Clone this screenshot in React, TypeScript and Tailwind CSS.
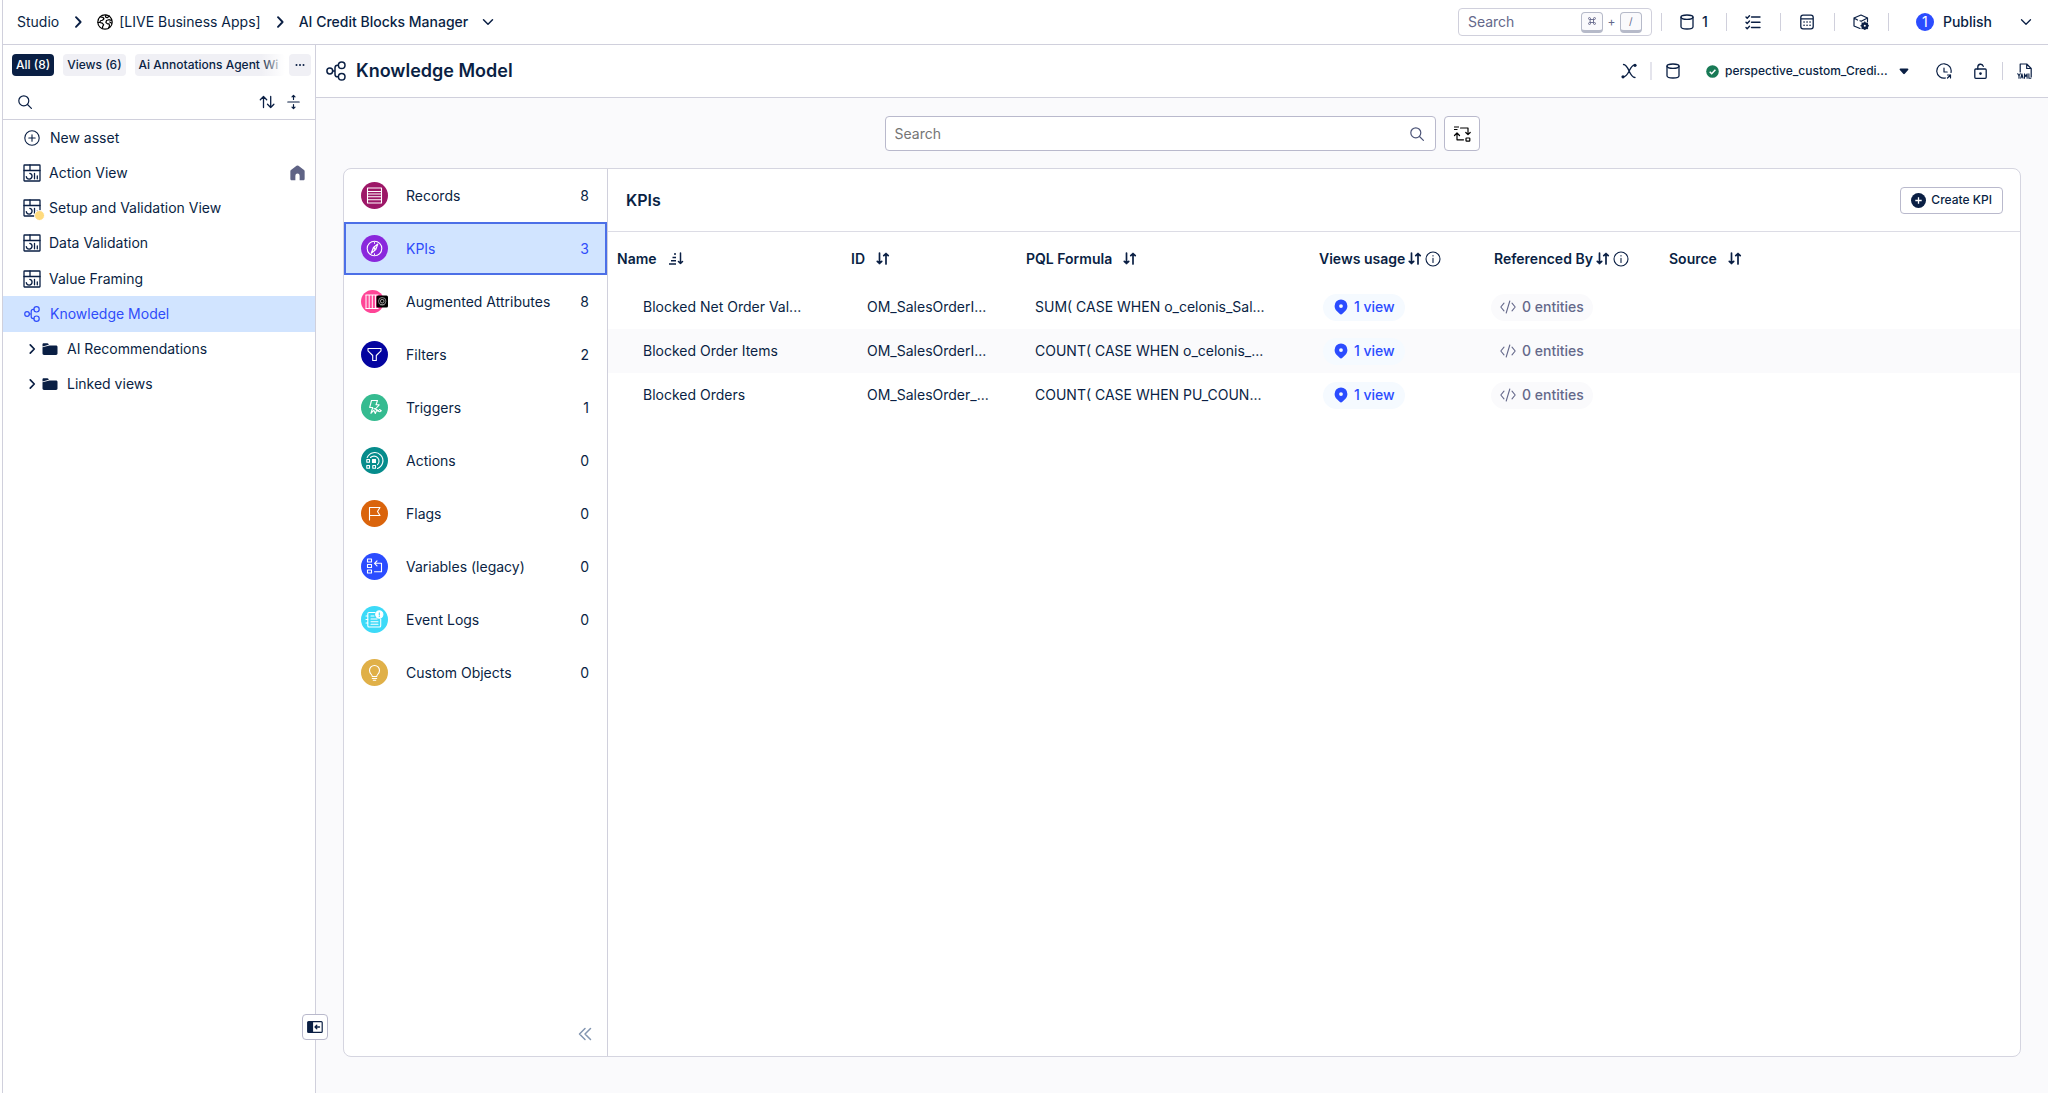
import { FC, ReactNode } from 'react';

interface IconProps {
  w?: number;
  h?: number;
  box?: string;
  sw?: number;
  className?: string;
  children: ReactNode;
}

const Icon: FC<IconProps> = ({ w = 16, h, box = '0 0 16 16', sw = 1.2, className = '', children }) => (
  <svg
    width={w}
    height={h ?? w}
    viewBox={box}
    fill="none"
    stroke="currentColor"
    strokeWidth={sw}
    strokeLinecap="round"
    strokeLinejoin="round"
    className={`shrink-0 ${className}`}
    aria-hidden="true"
  >
    {children}
  </svg>
);

const ChevronRight = ({ size = 16 }: { size?: number }) => (
  <Icon w={size} sw={1.9}>
    <path d="M6 3.2 10.6 8 6 12.8" />
  </Icon>
);

const ChevronDown = ({ sw = 1.6 }: { sw?: number }) => (
  <Icon w={12} box="0 0 12 12" sw={sw}>
    <path d="M1.5 3.8 6 8.3l4.5-4.5" />
  </Icon>
);

const Database = () => (
  <Icon w={14} h={16} box="0 0 14 16" sw={1.3}>
    <path d="M1 3.2C1 1.7 3 1 7 1s6 .7 6 2.2v9.6C13 14.3 11 15 7 15s-6-.7-6-2.2z" />
    <path d="M1 3.2C1.5 4.8 4 5.3 7 5.3s5.5-.5 6-2.1" />
  </Icon>
);

const SearchIcon = ({ className = '' }: { className?: string }) => (
  <Icon w={14} box="0 0 14 14" sw={1.2} className={className}>
    <circle cx="5.8" cy="5.8" r="5" />
    <path d="m9.5 9.5 3.9 3.9" />
  </Icon>
);

const ModelIcon = ({ w = 16 }: { w?: number }) => (
  <Icon w={w} box="0 0 20 20" sw={1.5}>
    <circle cx="3.8" cy="10" r="2.9" />
    <circle cx="15.7" cy="4.2" r="3.3" />
    <circle cx="15.7" cy="15.8" r="3.3" />
    <path d="M12.4 4.2h-.9c-1.8 0-2.500 1-2.500 2.600v6.400c0 1.600.7 2.600 2.500 2.600h.9M6.700 10H9" />
  </Icon>
);

const ViewIcon = () => (
  <Icon w={18} box="0 0 18 18" sw={1.3}>
    <rect x="1" y="1" width="16" height="16" rx=".5" />
    <path d="M1 6.500h16M7 1v5.500M6.800 9.300a2.900 2.900 0 1 1-3.500 3.300M11.500 9.300v5.500M14.300 12v2.800" />
  </Icon>
);

const Folder = () => (
  <Icon w={16} h={14} box="0 0 16 14" sw={0}>
    <path fill="currentColor" d="M.5 2.500C.5 1.700 1 1.200 1.800 1.200h3.500c.6 0 .9.300 1.200.9l.3.700L.5 4.400z" />
    <path fill="currentColor" d="M.5 5.300 7.500 3.500H14c.9 0 1.500.6 1.500 1.400v6.700c0 .8-.6 1.400-1.500 1.400H2c-.9 0-1.500-.6-1.500-1.400z" />
  </Icon>
);

const SortBoth = () => (
  <Icon w={14} h={13} box="0 0 14 13" sw={1.7}>
    <path d="M3.500 1v10.500M1.300 9.300l2.200 2.200 2.200-2.200M10 12V1.500M7.800 3.700 10 1.500l2.200 2.200" />
  </Icon>
);

const SortAsc = () => (
  <Icon w={16} h={13} box="0 0 16 13" sw={1.5}>
    <path d="M12.500 1v10.500M10.500 9.500l2 2 2-2" />
    <path strokeLinecap="butt" d="M1 12h7M3 8.700h5M4.500 5.400H8M6 2.100h2" />
  </Icon>
);

const Info = () => (
  <Icon w={16} sw={1.1}>
    <circle cx="8" cy="8" r="7" />
    <path d="M8 7.200v4.200M8 4.600v.3" />
  </Icon>
);

const Pin = () => (
  <Icon w={14} h={16} box="0 0 14 16" sw={0}>
    <path
      fill="currentColor"
      fillRule="evenodd"
      d="M7 .5a6.400 6.400 0 0 1 6.400 6.400c0 2.200-1 3.900-2.400 5.300l-2.600 2.600a2 2 0 0 1-2.800 0L3 12.200C1.600 10.800.6 9.100.6 6.900A6.400 6.400 0 0 1 7 .5zm0 4.700a1.900 1.900 0 1 0 0 3.800 1.900 1.900 0 0 0 0-3.800z"
    />
  </Icon>
);

const Code = () => (
  <Icon w={16} h={14} box="0 0 16 14" sw={1.1}>
    <path d="M4 3.200.8 7 4 10.800M12 3.200 15.200 7 12 10.800M9.800 1 6.200 13" />
  </Icon>
);

const Divider = () => <span className="h-[18px] w-px shrink-0 bg-[#d0d0dc]" />;

interface Category {
  name: string;
  count: number;
  color: string;
  art: ReactNode;
}

// every glyph is drawn on the same 27px disc
const categories: Category[] = [
  {
    name: 'Records',
    count: 8,
    color: '#9d1767',
    art: (
      <>
        <rect x="6.500" y="6" width="14" height="15" />
        <path d="M7 9.500h13M7 12h13M7 14.800h13M7 17.800h13" />
      </>
    ),
  },
  {
    name: 'KPIs',
    count: 3,
    color: '#8a27dc',
    art: (
      <>
        <circle cx="13.500" cy="13.500" r="7.300" />
        <path d="m16.800 9-2 5.500-4.600 3.700 2.200-5.700zM13.500 7.500v.8M13.500 18.800v.8" />
        <circle cx="13.500" cy="13.500" r=".7" fill="#fff" />
      </>
    ),
  },
  { name: 'Augmented Attributes', count: 8, color: '', art: null },
  { name: 'Filters', count: 2, color: '#0404a0', art: <path d="M7 7.500h13v2.300l-4.700 4.700v5h-3.600v-5L7 9.800z" /> },
  {
    name: 'Triggers',
    count: 1,
    color: '#35bb90',
    art: (
      <path d="M10.500 6.500h6l-1.500 4.300h3.200l-3.800 4.200M10.500 6.500 8.700 13.500h3l-1.800 5.800 2.800-3M12.800 16.300l1.500 3.200 1.200-3 2.500 1M13 14.500l4.500 2M18.500 15.500l1.800 1.200-1.500 1" />
    ),
  },
  {
    name: 'Actions',
    count: 0,
    color: '#068c8c',
    art: (
      <>
        <path d="M6.200 10.500a8.200 8.200 0 1 1 10.300 11M9.500 10.500a4.900 4.900 0 1 1 7 7.200" />
        <rect x="11.500" y="12.500" width="3" height="3" fill="#fff" />
        <rect x="5.800" y="12.500" width="2.700" height="2.700" />
        <rect x="5.800" y="18.500" width="2.700" height="2.700" />
        <rect x="11.800" y="18.500" width="2.700" height="2.700" />
      </>
    ),
  },
  { name: 'Flags', count: 0, color: '#da640c', art: <path d="M8.500 20V7.500h10.500l-2.500 4 2.500 4H8.500" /> },
  {
    name: 'Variables (legacy)',
    count: 0,
    color: '#2b4cff',
    art: (
      <>
        <rect x="6.500" y="6" width="4" height="3" />
        <rect x="6.500" y="11.500" width="4" height="3" />
        <rect x="6.500" y="17" width="4" height="3" />
        <path d="M13.500 18.700h7V10.300h-6.300M16 7.800l-2.500 2.500 2.500 2.500" />
      </>
    ),
  },
  {
    name: 'Event Logs',
    count: 0,
    color: '#3cdaf8',
    art: (
      <>
        <path d="M14 6.500H8c-.8 0-1.200.5-1.200 1.200v12c0 .8.4 1.300 1.200 1.300h10.500c.8 0 1.200-.5 1.200-1.300V13M5 10h2M5 13.500h2M5 17h2M10 13h6M10 15.700h7M10 18.300h7M10 10h3" />
        <circle cx="18.300" cy="8.500" r="3.600" fill="#fff" />
        <path d="M18.300 6.700v2.200M18.300 10.300v.2" stroke="#3cdaf8" />
      </>
    ),
  },
  {
    name: 'Custom Objects',
    count: 0,
    color: '#e0b048',
    art: (
      <path d="M11.300 17.500c0-2-2.800-2.800-2.800-6a5 5 0 0 1 10 0c0 3.200-2.800 4-2.800 6zM11.300 19.500h4.400M12.300 21.200h2.400" />
    ),
  },
];

const CategoryIcon = ({ color, art }: { color: string; art: ReactNode }) => (
  <svg width="27" height="27" viewBox="0 0 27 27" fill="none" className="shrink-0" aria-hidden="true">
    {art ? (
      <>
        <circle cx="13.500" cy="13.500" r="13.500" fill={color} />
        <g stroke="#fff" strokeWidth="1.100" strokeLinejoin="round" strokeLinecap="round">
          {art}
        </g>
      </>
    ) : (
      <>
        <circle cx="11.500" cy="13.500" r="11.500" fill="#ff4597" />
        <path d="M4.500 7h13M4.500 20.500h13M5 7v13.500M8.200 7v13.500M11.300 7v13.500M14.400 7v13.500" stroke="#fff" />
        <rect x="15.500" y="7.500" width="11.500" height="12" rx="1.500" fill="#000" />
        <circle cx="21.200" cy="13.200" r="3.700" stroke="#aaa" strokeWidth=".8" />
        <circle cx="21.200" cy="13.200" r="1.800" stroke="#ccc" strokeWidth=".8" />
        <path d="M19 16.800h4.400" stroke="#aaa" strokeWidth=".8" />
      </>
    )}
  </svg>
);

const rows = [
  { name: 'Blocked Net Order Val...', id: 'OM_SalesOrderI...', pql: 'SUM( CASE WHEN o_celonis_Sal...' },
  { name: 'Blocked Order Items', id: 'OM_SalesOrderI...', pql: 'COUNT( CASE WHEN o_celonis_...' },
  { name: 'Blocked Orders', id: 'OM_SalesOrder_...', pql: 'COUNT( CASE WHEN PU_COUN...' },
];

const TopBar = () => (
  <header className="flex h-[45px] items-center border-b border-[#d0d0dc] pl-[14px]">
    <nav className="flex items-center text-sm" aria-label="Breadcrumb">
      <a href="#studio">Studio</a>
      <span className="mx-[11px]">
        <ChevronRight />
      </span>
      <a href="#apps" className="flex items-center gap-[6px]">
        <Icon w={16} sw={1.2} className="text-black">
          <circle cx="8" cy="8" r="7.200" />
          <path d="M3.500 3l2.500.3 1 1.500-1.500 1.400-2 .6-.7 1.700L1 8.500M2.800 8.500l2.500.7 1.400 1.600-1 1.600L5.500 14M9 1l-.6 2 1.700.8 1.400-1 .8-.8M9.500 6.500l2.300-.8 2.500.6M9.500 6.500l-.6 2 1.700 1.400h1.500l.4 2-1 2M12.800 8l1.800 1.200" />
        </Icon>
        [LIVE Business Apps]
      </a>
      <span className="mx-[11px]">
        <ChevronRight />
      </span>
      <button className="flex items-center gap-[14px] font-medium">
        AI Credit Blocks Manager
        <ChevronDown sw={1.5} />
      </button>
    </nav>

    <div className="ml-auto flex items-center">
      <label className="mr-[9px] flex h-7 w-[194px] items-center rounded border border-[#d0d0dc] px-[9px] text-sm">
        <input
          type="text"
          placeholder="Search"
          aria-label="Search studio"
          className="min-w-0 flex-1 outline-none placeholder:text-[#64688a]"
        />
        <kbd className="flex h-[21px] w-[22px] items-center justify-center rounded border border-b-[3px] border-[#b6bac9] bg-[#fafafc] font-[Inter,sans-serif] text-[10px] text-[#64688a]">
          <Icon w={8} box="0 0 16 16" sw={1.8}>
            <path d="M5 5h6v6H5zM5 5H3a2 2 0 1 1 2-2zM11 5V3a2 2 0 1 1 2 2zM11 11h2a2 2 0 1 1-2 2zM5 11v2a2 2 0 1 1-2-2z" />
          </Icon>
        </kbd>
        <span className="w-[17px] text-center text-xs text-[#64688a]">+</span>
        <kbd className="flex h-[21px] w-[22px] items-center justify-center rounded border border-b-[3px] border-[#b6bac9] bg-[#fafafc] font-[Inter,sans-serif] text-[10px] text-[#64688a]">
          /
        </kbd>
      </label>
      <Divider />
      <button className="flex w-16 items-center justify-center gap-2 text-sm font-medium">
        <Database />1
      </button>
      <Divider />
      <button className="flex w-[53px] justify-center" aria-label="Tasks">
        <Icon sw={1.4}>
          <path d="M6.500 3H15M6.500 8.300H15M6.500 13.500H15" />
          <path d="m1 3 1.200 1.200L4.500 1.800M1 8.300l1.200 1.200 2.300-2.400M1 13.500l1.200 1.200 2.300-2.400" />
        </Icon>
      </button>
      <Divider />
      <button className="flex w-[53px] justify-center" aria-label="Calendar">
        <Icon w={14} h={16} box="0 0 14 16" sw={1.3}>
          <path d="M.8 3.500C.8 2 1.500 1.200 3 1.200h8c1.500 0 2.200.8 2.200 2.300v9c0 1.500-.7 2.300-2.200 2.300H3c-1.500 0-2.200-.8-2.200-2.300zM1 4.800h12" />
          <path d="M7 8h.1M10 8h.1M4 11.200h.1M7 11.200h.1M10 11.200h.1M4 8h.1" strokeWidth="1.600" />
        </Icon>
      </button>
      <Divider />
      <button className="flex w-[53px] justify-center" aria-label="Package settings">
        <Icon w={16} sw={1.2}>
          <path d="M7 14.500 1 12V4l7-3 6.500 3v3.500M1 4l3.500 2M7 6.800l1.200.5L14.500 4M1 4v3" />
          <circle cx="11.800" cy="11.800" r="2.500" strokeWidth="2.200" />
          <path d="M11.800 7.800v8M7.800 11.800h8M9 9l5.600 5.600M14.600 9 9 14.600" strokeWidth="1.100" />
          <circle cx="11.800" cy="11.800" r="1" fill="#fff" stroke="none" />
        </Icon>
      </button>
      <Divider />
      <button className="ml-[27px] flex items-center gap-[9px] text-sm font-medium">
        <span className="flex size-[18px] items-center justify-center rounded-full bg-[#2b4cff] text-sm font-normal text-white">1</span>
        Publish
      </button>
      <button className="mr-4 ml-7" aria-label="Publish options">
        <ChevronDown sw={1.3} />
      </button>
    </div>
  </header>
);

const Sidebar = () => (
  <aside className="relative w-[313px] shrink-0 border-r border-[#d0d0dc]">
    <div className="flex h-[75px] flex-col border-b border-[#d0d0dc]">
      <div className="flex items-center gap-1 pt-[9px] pr-1 pl-[9px] text-xs font-medium">
        <div className="relative flex min-w-0 flex-1 gap-[9px] whitespace-nowrap">
          <button className="h-[22px] rounded bg-[#0a1f44] px-1 text-white">All (8)</button>
          <button className="h-[22px] rounded bg-[#f0f0f5] px-1">Views (6)</button>
          <button className="h-[22px] min-w-0 flex-1 rounded bg-[#f0f0f5] pl-1 text-left">Ai Annotations Agent Wi</button>
          <span className="absolute inset-y-0 right-0 w-6 bg-linear-to-r from-white/0 to-white" />
        </div>
        <button className="flex h-[22px] w-[22px] items-center justify-center rounded bg-[#f0f0f5]" aria-label="More filters">
          <Icon w={10} h={4} box="0 0 10 4" sw={0}>
            <circle cx="1.500" cy="2" r="1" fill="currentColor" />
            <circle cx="5" cy="2" r="1" fill="currentColor" />
            <circle cx="8.500" cy="2" r="1" fill="currentColor" />
          </Icon>
        </button>
      </div>
      <div className="flex flex-1 items-center px-[15px] pt-2">
        <button aria-label="Search assets">
          <SearchIcon />
        </button>
        <button className="mr-3 ml-auto" aria-label="Sort assets">
          <Icon w={16} h={14} box="0 0 16 14" sw={1.3}>
            <path d="M4.500 12.500v-11M1.300 4.700l3.200-3.200 3.200 3.200M11.700 1.500v11M8.500 9.300l3.200 3.200 3.200-3.200" />
          </Icon>
        </button>
        <button aria-label="Collapse all">
          <Icon w={13} h={16} box="0 0 13 16" sw={1.2}>
            <path d="M.8 8h11.400M6.500 5.500V1.500M5 2.800l1.500-1.500L8 2.800M6.500 10.500v4M5 13.200l1.500 1.500L8 13.200" />
          </Icon>
        </button>
      </div>
    </div>

    <nav className="grid h-[282px] auto-rows-fr text-sm" aria-label="Assets">
      <button className="flex items-center gap-[10px] pl-[21px]">
        <Icon w={16} sw={1.1}>
          <circle cx="8" cy="8" r="7.200" />
          <path d="M8 4.800v6.400M4.800 8h6.400" />
        </Icon>
        New asset
      </button>
      <a href="#action" className="flex items-center gap-2 pr-[10px] pl-5">
        <ViewIcon />
        Action View
        <Icon w={15} h={16} box="0 0 14 15" sw={0} className="ml-auto text-[#5f6385]">
          <path
            fill="currentColor"
            d="M6.100.8a1.300 1.300 0 0 1 1.800 0l5.200 3.900c.4.300.6.700.6 1.200v7c0 .9-.6 1.500-1.400 1.500H9V10a2 2 0 0 0-4 0v4.400H1.700c-.8 0-1.400-.6-1.400-1.500v-7c0-.5.2-.9.6-1.200z"
          />
        </Icon>
      </a>
      <a href="#setup" className="flex items-center gap-2 pl-5">
        <span className="relative">
          <ViewIcon />
          <span className="absolute -right-1 -bottom-1 size-[11px] rounded-full border border-white bg-[#ffdb7d]" />
        </span>
        Setup and Validation View
      </a>
      <a href="#data" className="flex items-center gap-2 pl-5">
        <ViewIcon />
        Data Validation
      </a>
      <a href="#value" className="flex items-center gap-2 pl-5">
        <ViewIcon />
        Value Framing
      </a>
      <a href="#model" className="flex items-center gap-[10px] bg-[#d1e4ff] pl-[21px] text-[#2f4cfa]">
        <ModelIcon />
        Knowledge Model
      </a>
      <button className="flex items-center pl-[22px]">
        <ChevronRight size={14} />
        <span className="mr-[9px] ml-[3px]">
          <Folder />
        </span>
        AI Recommendations
      </button>
      <button className="flex items-center pl-[22px]">
        <ChevronRight size={14} />
        <span className="mr-[9px] ml-[3px]">
          <Folder />
        </span>
        Linked views
      </button>
    </nav>

    <button
      className="absolute -right-[13px] bottom-[53px] flex size-[26px] items-center justify-center rounded border border-[#b9b9cc] bg-white"
      aria-label="Collapse sidebar"
    >
      <Icon w={16} h={12} box="0 0 16 12" sw={1.2}>
        <rect x=".8" y=".6" width="14.400" height="10.800" rx="1" />
        <path d="M1 1h4.500v10H1z" fill="currentColor" />
        <path d="M8 6h4.500M9.800 4.300 8 6l1.800 1.700" strokeWidth="1.300" />
      </Icon>
    </button>
  </aside>
);

const ModelHeader = () => (
  <div className="flex h-[53px] items-center border-b border-[#d0d0dc] bg-white pr-[5px] pl-[10px]">
    <ModelIcon w={20} />
    <h1 className="ml-[10px] text-lg font-semibold">Knowledge Model</h1>
    <div className="ml-auto flex items-center">
      <button className="flex w-9 justify-center" aria-label="Lineage">
        <Icon sw={1.3}>
          <path d="M2.500 13.800C8 13.800 8.500 2.200 13.500 2.200M2.500 1.500C8 1.500 8 14.500 14 14.500" />
          <circle cx="2" cy="13.800" r="1.600" fill="currentColor" stroke="none" />
          <circle cx="14" cy="2.300" r="1.600" fill="currentColor" stroke="none" />
        </Icon>
      </button>
      <span className="mx-[3px] h-[18px] w-[2px] bg-[#e4e4ec]" />
      <button className="flex w-9 justify-center" aria-label="Data source">
        <Database />
      </button>
      <label className="ml-[15px] flex items-center">
        <svg width="13" height="13" viewBox="0 0 13 13" fill="none" aria-hidden="true">
          <circle cx="6.500" cy="6.500" r="6.300" fill="#197a56" />
          <path d="m3.700 6.700 2 2 3.700-4" stroke="#fff" strokeWidth="1.500" />
        </svg>
        <select
          aria-label="Perspective"
          className="ml-[6px] w-[174px] appearance-none bg-transparent text-xs font-medium outline-none"
        >
          <option>perspective_custom_Credi...</option>
        </select>
        <svg width="10" height="7" viewBox="0 0 10 7" fill="currentColor" aria-hidden="true">
          <path d="M1.500.5h7c.9 0 1.200.9.6 1.500L5.800 5.800a1.100 1.100 0 0 1-1.600 0L.9 2C.3 1.400.6.5 1.500.5z" />
        </svg>
      </label>
      <button className="ml-[17px] flex w-9 justify-center" aria-label="History">
        <Icon sw={1.2}>
          <path d="M15 9.500A7.200 7.200 0 1 0 9.500 15M8 5v4h3.200" />
          <path d="M11.500 12h3v3M14.500 12l-3 3" />
        </Icon>
      </button>
      <button className="flex w-9 justify-center" aria-label="Unlock">
        <Icon w={13} h={16} box="0 0 13 16" sw={1.3}>
          <rect x=".8" y="6" width="11.400" height="9.300" rx="1" />
          <path d="M3.800 6V4a2.800 2.800 0 0 1 5.500-.7" />
          <circle cx="6.500" cy="10.600" r=".7" fill="currentColor" />
        </Icon>
      </button>
      <span className="mx-1 h-[18px] w-px bg-[#d0d0dc]" />
      <button className="flex w-9 justify-center" aria-label="YAML">
        <Icon w={16} sw={1.2}>
          <path d="M3.200 9V1h6.500l4.500 4.500V14M9.700 1v4.500h4.500" />
          <path
            strokeWidth="1.100"
            d="M.8 10.700l1.200 2 1.200-2M2 12.700v2.500M3.800 15.200l1.100-4.300L6 15.200M4.200 14h1.500M7.500 15.200v-4.300l1.300 2.500 1.300-2.500v4.300M11.900 10.900v4.300h1.900"
          />
        </Icon>
      </button>
    </div>
  </div>
);

const thClass = 'pl-[9px] text-left font-semibold';

const KpiTable = () => (
  <table className="w-full table-fixed text-sm">
    <colgroup>
      <col className="w-[234px]" />
      <col className="w-[175px]" />
      <col className="w-[293px]" />
      <col className="w-[175px]" />
      <col className="w-[175px]" />
      <col />
    </colgroup>
    <thead>
      <tr className="h-[53px] whitespace-nowrap">
        <th className={thClass}>
          <button className="flex items-center gap-[11px]">
            Name <SortAsc />
          </button>
        </th>
        <th className={thClass}>
          <button className="flex items-center gap-[11px]">
            ID <SortBoth />
          </button>
        </th>
        <th className={thClass}>
          <button className="flex items-center gap-[11px]">
            PQL Formula <SortBoth />
          </button>
        </th>
        <th className={thClass}>
          <button className="flex items-center gap-[3px]">
            Views usage <SortBoth /> <Info />
          </button>
        </th>
        <th className={thClass}>
          <button className="flex items-center gap-[3px]">
            Referenced By <SortBoth /> <Info />
          </button>
        </th>
        <th className={thClass}>
          <button className="flex items-center gap-[11px]">
            Source <SortBoth />
          </button>
        </th>
      </tr>
    </thead>
    <tbody>
      {rows.map((row) => (
        <tr key={row.name} className="h-11 whitespace-nowrap even:bg-[#fafafc]">
          <td className="pl-[35px]">{row.name}</td>
          <td className="pl-[25px]">{row.id}</td>
          <td className="pl-[18px]">{row.pql}</td>
          <td className="pl-[13px]">
            <button className="flex h-[27px] items-center gap-[6px] rounded-full bg-[#f5faff] pr-[10px] pl-[11px] font-medium text-[#2b4cff]">
              <Pin />1 view
            </button>
          </td>
          <td className="pl-[6px]">
            <button className="flex h-[27px] items-center gap-[6px] rounded-full bg-[#fafafc] pr-[9px] pl-[9px] font-medium text-[#64688a]">
              <Code />0 entities
            </button>
          </td>
          <td></td>
        </tr>
      ))}
    </tbody>
  </table>
);

const App: FC = () => {
  return (
    <div className="flex min-h-screen bg-white pl-[2px] font-[Inter,sans-serif] text-[#0a1f44]">
      <div className="flex min-w-0 flex-1 flex-col border-l border-[#d0d0dc]">
        <TopBar />
        <div className="flex flex-1">
          <Sidebar />
          <main className="flex min-w-0 flex-1 flex-col bg-[#fafafc]">
            <ModelHeader />

            {/* search */}
            <div className="flex justify-center gap-2 pt-[18px] pb-[17px]">
              <label className="flex h-[35px] w-[551px] items-center rounded border border-[#b9b9cc] bg-white pr-[11px] pl-[9px] text-sm">
                <input
                  type="text"
                  placeholder="Search"
                  aria-label="Search knowledge model"
                  className="min-w-0 flex-1 outline-none placeholder:text-[#757575]"
                />
                <SearchIcon className="text-[#4d5578]" />
              </label>
              <button
                className="flex h-[35px] w-9 items-center justify-center rounded border border-[#b9b9cc] bg-white text-black"
                aria-label="Switch layout"
              >
                <Icon w={18} h={16} box="0 0 18 16" sw={1.2}>
                  <path strokeLinecap="butt" d="M1 1h5M1 3.500h3.500" />
                  <path d="M7.500 2H15v6.500M12.800 6.500 15 8.700l2.200-2.200M10.500 13.800H4V7.500M1.500 9.500 4 7l2.500 2.500" />
                  <rect x="13" y="12" width="3.800" height="3.200" rx=".6" />
                </Icon>
              </button>
            </div>

            {/* model browser */}
            <div className="mx-[27px] mb-9 flex flex-1 overflow-hidden rounded-lg border border-[#d5d5e0] bg-white">
              <div className="flex w-[264px] shrink-0 flex-col border-r border-[#d0d0dc] text-sm">
                {categories.map((c) => (
                  <button
                    key={c.name}
                    className={`flex h-[53px] items-center border-2 pr-4 pl-[15px] text-left ${
                      c.name === 'KPIs' ? 'border-[#4c6fe7] bg-[#d1e4ff] text-[#2f4cfa]' : 'border-transparent'
                    }`}
                  >
                    <CategoryIcon color={c.color} art={c.art} />
                    <span className="ml-[18px] flex-1">{c.name}</span>
                    {c.count}
                  </button>
                ))}
                <button className="mt-auto mr-[15px] mb-[15px] self-end text-[#8295b0]" aria-label="Collapse list">
                  <Icon w={14} box="0 0 14 14" sw={1.5}>
                    <path d="M7 1.500 1.500 7 7 12.500M12.500 1.500 7 7l5.500 5.500" />
                  </Icon>
                </button>
              </div>

              <section className="min-w-0 flex-1">
                <div className="flex h-[63px] items-center border-b border-[#dcdce5] pr-[17px] pl-[18px]">
                  <h2 className="text-base font-semibold">KPIs</h2>
                  <button className="ml-auto flex h-[27px] items-center gap-[5px] rounded border border-[#b9b9cc] px-[10px] text-xs font-medium">
                    <svg width="15" height="15" viewBox="0 0 15 15" fill="none" aria-hidden="true">
                      <circle cx="7.500" cy="7.500" r="7.500" fill="#0a1f44" />
                      <path d="M7.500 4.300v6.400M4.300 7.500h6.400" stroke="#fff" strokeWidth="1.300" />
                    </svg>
                    Create KPI
                  </button>
                </div>
                <KpiTable />
              </section>
            </div>
          </main>
        </div>
      </div>
    </div>
  );
};

export default App;
